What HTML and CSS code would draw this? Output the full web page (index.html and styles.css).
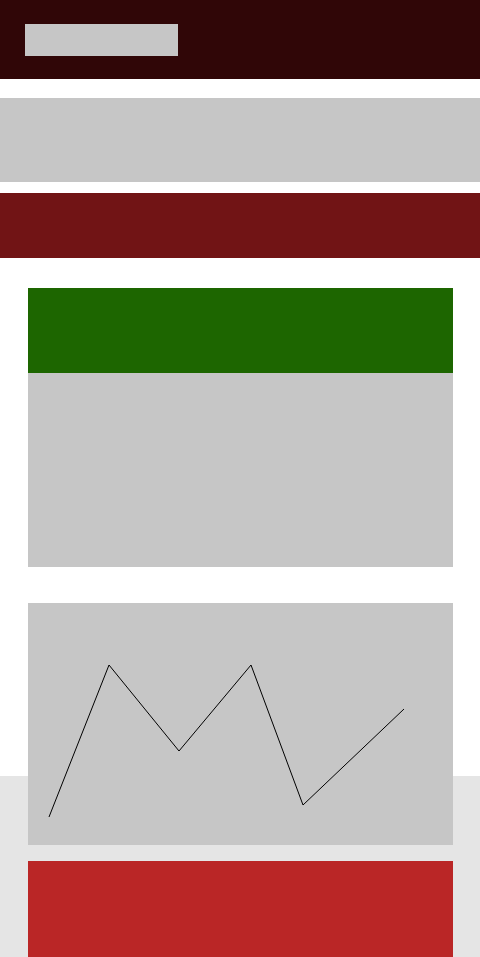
FILE: index.html
```html
<!DOCTYPE html>
<html>
<head>
<meta charset="utf-8">
<link rel="stylesheet" href="styles.css">
</head>
<body>
<header class="topbar">
  <div class="logo"></div>
</header>
<div class="banner"></div>
<div class="strip"></div>
<main class="content">
  <section class="card">
    <div class="card-head"></div>
    <div class="card-body"></div>
  </section>
  <section class="chart">
    <svg width="425" height="242" viewBox="0 0 425 242">
      <polyline points="21,214 81,62 151,148 223,62 275,202 376,106" fill="none" stroke="#000" stroke-width="1"/>
    </svg>
  </section>
  <section class="alert"></section>
</main>
</body>
</html>
```

FILE: styles.css
```css
html {
  margin: 0;
  padding: 0;
  background: linear-gradient(#fff 0, #fff 776px, #e5e5e5 776px);
}
body {
  margin: 0;
  padding: 0;
  width: 480px;
  height: 957px;
  overflow: hidden;
  background: transparent;
  font-family: "Liberation Sans", Arial, sans-serif;
}
.topbar {
  height: 79px;
  background: #300607;
  padding: 24px 0 0 25px;
  box-sizing: border-box;
  margin-bottom: 19px;
}
.logo {
  width: 153px;
  height: 32px;
  background: #c6c6c6;
}
.banner {
  height: 84px;
  background: #c6c6c6;
  margin-bottom: 11px;
}
.strip {
  height: 65px;
  background: #711415;
}
.content {
  padding: 30px 27px 0 28px;
  display: flex;
  flex-direction: column;
}
.card {
  display: flex;
  flex-direction: column;
  margin-bottom: 36px;
}
.card-head {
  height: 85px;
  background: #1d6600;
}
.card-body {
  height: 194px;
  background: #c6c6c6;
}
.chart {
  height: 242px;
  background: #c6c6c6;
  margin-bottom: 16px;
}
.chart svg {
  display: block;
}
.alert {
  height: 120px;
  background: #ba2626;
}
```
